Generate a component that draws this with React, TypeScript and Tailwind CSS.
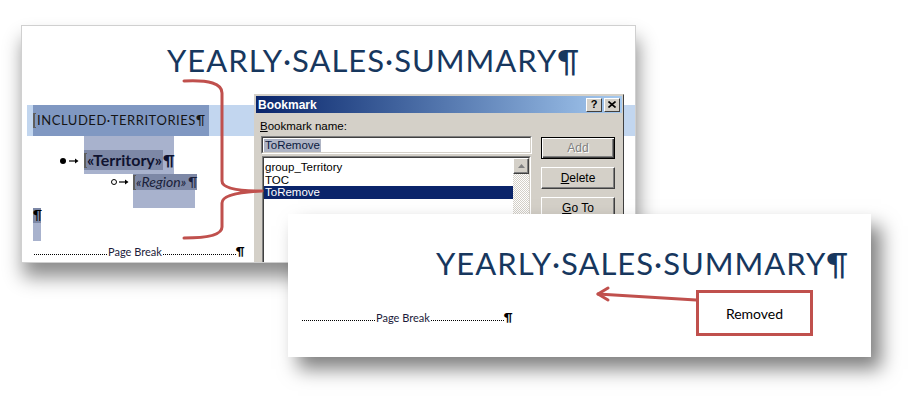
const doc = "font-['Lato','Open_Sans',sans-serif]";
const ui = "font-['Liberation_Sans',Arial,sans-serif]";

const TabArrow = () => (
  <svg width="10" height="6" viewBox="0 0 10 6" className="shrink-0">
    <path d="M0 3 H8" stroke="#000" strokeWidth="1.2" />
    <path d="M6 0.5 L9.5 3 L6 5.5 Z" fill="#000" />
  </svg>
);

const PageBreak = () => (
  <div className={`flex items-end h-[18px] ${doc} text-[11px] leading-none text-[#1b1b3a]`}>
    <div className="w-[73px] mb-[4px] border-b border-dotted border-black" />
    <span className="px-px pb-[2px]">Page Break</span>
    <div className="w-[73px] mb-[4px] border-b border-dotted border-black" />
    <span className="pb-[2px] font-bold text-[12px] text-black">¶</span>
  </div>
);

const Mark = () => (
  <span className="inline-block w-[3px] h-[15px] border-l-2 border-y border-[#5e5e5e] shrink-0" />
);

const RaisedButton = ({ children, disabled }: { children: React.ReactNode; disabled?: boolean }) => (
  <div
    className={`h-[22px] w-[74px] flex items-center justify-center text-[12px] ${
      disabled
        ? "border border-black text-[#808080] [text-shadow:1px_1px_0_#fff] shadow-[inset_1px_1px_0_#fff,inset_-1px_-1px_0_#404040,inset_-2px_-2px_0_#808080]"
        : "border border-t-white border-l-white border-r-[#404040] border-b-[#404040] shadow-[inset_-1px_-1px_0_#808080] text-black"
    }`}
  >
    {children}
  </div>
);

const BookmarkDialog = () => (
  <div className={`absolute left-[232px] top-[68px] w-[370px] h-[200px] bg-[#d4d0c8] border border-t-[#d4d0c8] border-l-[#d4d0c8] border-r-[#404040] border-b-[#404040] p-px ${ui}`}>
    <div className="h-[17px] flex items-center pl-[2px] pr-[2px] bg-gradient-to-r from-[#0a246a] to-[#a6caf0]">
      <span className="text-white font-bold text-[12px] leading-none">Bookmark</span>
      <div className="ml-auto flex gap-[2px]">
        <div className="w-[16px] h-[14px] bg-[#d4d0c8] border border-t-white border-l-white border-r-[#404040] border-b-[#404040] flex items-center justify-center text-[11px] font-bold leading-none text-black">
          ?
        </div>
        <div className="w-[16px] h-[14px] bg-[#d4d0c8] border border-t-white border-l-white border-r-[#404040] border-b-[#404040] flex items-center justify-center">
          <svg width="8" height="7" viewBox="0 0 8 7">
            <path d="M0.5 0.5 L7.5 6.5 M7.5 0.5 L0.5 6.5" stroke="#000" strokeWidth="1.6" />
          </svg>
        </div>
      </div>
    </div>
    <div className="flex pl-[4px]">
      <div className="w-[272px]">
        <div className="mt-[7px] h-[13px] text-[11.5px] leading-[13px] text-black">
          <span className="underline">B</span>ookmark name:
        </div>
        <div className="mt-[3px] ml-px h-[18px] border border-t-[#808080] border-l-[#808080] border-r-white border-b-white">
          <div className="h-full bg-white border border-t-[#404040] border-l-[#404040] border-r-[#d4d0c8] border-b-[#d4d0c8] flex items-center pl-px">
            <span className="text-[11.5px] leading-[13px] bg-[#aeb4c4] text-[#0a1a40] px-px">ToRemove</span>
          </div>
        </div>
        <div className="mt-[2px] ml-[2px] w-[269px] h-[120px] border border-t-[#808080] border-l-[#808080] border-r-white border-b-white">
          <div className="h-full bg-white border border-t-[#404040] border-l-[#404040] border-r-[#d4d0c8] border-b-[#d4d0c8] flex">
            <div className="flex-1 pt-[3px] text-[11.5px] leading-[12.5px] text-black">
              <div className="pl-[1px]">group_Territory</div>
              <div className="pl-[1px]">TOC</div>
              <div className="pl-[1px] bg-[#0a246a] text-white h-[13px]">ToRemove</div>
            </div>
            <div className="w-[16px] flex flex-col bg-[repeating-conic-gradient(#d4d0c8_0%_25%,#ffffff_0%_50%)] bg-[length:2px_2px]">
              <div className="h-[16px] bg-[#d4d0c8] border border-t-white border-l-white border-r-[#404040] border-b-[#404040] shadow-[inset_-1px_-1px_0_#808080] flex items-center justify-center">
                <svg width="7" height="4" viewBox="0 0 7 4">
                  <path d="M3.5 0 L7 4 L0 4 Z" fill="#808080" />
                </svg>
              </div>
            </div>
          </div>
        </div>
      </div>
      <div className="ml-[9px] pt-[24px] flex flex-col gap-[8px]">
        <RaisedButton disabled>Add</RaisedButton>
        <RaisedButton>
          <span>
            <span className="underline">D</span>elete
          </span>
        </RaisedButton>
        <RaisedButton>
          <span>
            <span className="underline">G</span>o To
          </span>
        </RaisedButton>
      </div>
    </div>
  </div>
);

const SourceDocument = () => (
  <div className={`absolute left-[21px] top-[25px] w-[615px] h-[238px] bg-white border border-[#d0d0d0] overflow-hidden shadow-[2px_14px_18px_rgba(0,0,0,0.45)] ${doc}`}>
    <div className="pt-[19px] pl-[145px] text-[31px] leading-none tracking-[1px] text-[#17375e] whitespace-nowrap">
      YEARLY·SALES·SUMMARY¶
    </div>
    <div className="mt-[29px] ml-[5px] h-[31px] bg-[#c2d6ef] flex">
      <div className="ml-[6px] w-[176px] h-full bg-[#8098c2] flex items-center gap-px">
        <Mark />
        <span className="text-[13px] leading-none tracking-[0.55px] text-[#151515] whitespace-nowrap">
          INCLUDED·TERRITORIES¶
        </span>
      </div>
    </div>
    <div className="flex h-[38px]">
      <div className="ml-[38px] mt-[22px] w-[6px] h-[6px] rounded-full bg-black shrink-0" />
      <div className="ml-[3px] mt-[22px]">
        <TabArrow />
      </div>
      <div className="ml-[5px] w-[90px] h-full bg-[#a8b2cd]">
        <div className="mt-[14px] flex items-center h-[20px]">
          <div className="h-full bg-[#7d88a6] flex items-center pr-px">
            <Mark />
            <span className="text-[16px] font-bold leading-none text-[#0f1330]">«Territory»</span>
          </div>
          <span className="text-[16px] font-bold leading-none text-[#0f1330]">¶</span>
        </div>
      </div>
    </div>
    <div className="flex h-[34px]">
      <div className="ml-[89px] mt-[5px] w-[6px] h-[6px] rounded-full border border-black shrink-0" />
      <div className="ml-[2px] mt-[5px]">
        <TabArrow />
      </div>
      <div className="ml-[4px] w-[62px] h-full bg-[#a8b2cd]">
        <div className="flex items-center h-[16px]">
          <div className="h-full bg-[#7d88a6] flex items-center pr-[2px]">
            <Mark />
            <span className="text-[14px] italic leading-none text-[#1a1f3a]">«Region»</span>
          </div>
          <span className="h-full bg-[#7d88a6] text-[13px] leading-[16px] text-[#1a1f3a]">¶</span>
        </div>
      </div>
    </div>
    <div className="ml-[11px] w-[8px] h-[33px] bg-[#a8b2cd]">
      <div className="h-[15px] bg-[#7d88a6] text-[13px] leading-[15px] text-black text-center">¶</div>
    </div>
    <div className="ml-[12px]">
      <PageBreak />
    </div>
    <BookmarkDialog />
  </div>
);

const ResultDocument = () => (
  <div className={`absolute left-[288px] top-[214px] w-[583px] h-[143px] bg-white shadow-[10px_12px_18px_rgba(0,0,0,0.5)] ${doc}`}>
    <div className="pt-[34px] pl-[148px] text-[31px] leading-none tracking-[1px] text-[#17375e] whitespace-nowrap">
      YEARLY·SALES·SUMMARY¶
    </div>
    <div className="mt-[28px] ml-[14px]">
      <PageBreak />
    </div>
  </div>
);

export default function App() {
  return (
    <div className="relative w-[908px] h-[399px] overflow-hidden bg-white">
      <SourceDocument />
      <svg className="absolute inset-0 pointer-events-none" width="908" height="399">
        <path
          d="M184 81 Q222 79 222 93 L222 181 Q222 191 262 191 Q222 193 222 203 L222 227 Q222 238 184 238"
          fill="none"
          stroke="#c0504d"
          strokeWidth="3"
          strokeLinecap="round"
          strokeLinejoin="round"
        />
      </svg>
      <ResultDocument />
      <svg className="absolute inset-0 pointer-events-none" width="908" height="399">
        <path d="M696 300 L598 294" stroke="#c0504d" strokeWidth="3" strokeLinecap="round" />
        <path d="M608 288 L598 294 L608 300" fill="none" stroke="#c0504d" strokeWidth="3" strokeLinecap="round" strokeLinejoin="round" />
      </svg>
      <div className="absolute left-[696px] top-[290px] w-[117px] h-[46px] border-[3px] border-[#c0504d] bg-white flex items-center justify-center font-['Lato','Open_Sans',sans-serif] text-[14px] text-black">
        Removed
      </div>
    </div>
  );
}
